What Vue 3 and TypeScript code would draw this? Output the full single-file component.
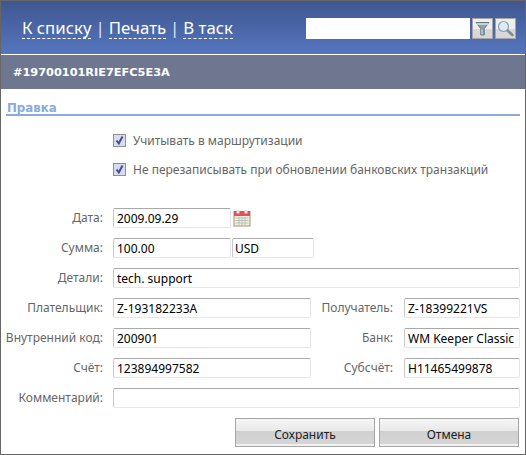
<script setup lang="ts">
const links = ['К списку', 'Печать', 'В таск']
</script>

<template>
  <div class="win">
    <header class="top">
      <nav class="nav">
        <template v-for="(l, i) in links" :key="l">
          <span v-if="i" class="sep">|</span>
          <a class="link">{{ l }}</a>
        </template>
      </nav>
      <div class="search">
        <input class="q" type="text" />
        <button class="ib" type="button" aria-label="filter">
          <svg width="19" height="19" viewBox="0 0 19 19">
            <path d="M3 3.500h13l-4.800 6.200v6.300h-3.400v-6.300z" fill="#8ea3a8" stroke="#66797e" stroke-width="1" />
            <path d="M3.500 5h12" stroke="#d8e4e6" stroke-width="1.500" />
            <path d="M9 10.500v5" stroke="#dbe6e8" stroke-width="1" />
          </svg>
        </button>
        <button class="ib" type="button" aria-label="search">
          <svg width="19" height="19" viewBox="0 0 19 19">
            <path d="M11.500 11.500l5 4.500" stroke="#7d8f93" stroke-width="2.600" stroke-linecap="round" />
            <circle cx="7.500" cy="7.500" r="5" fill="#dcebf6" stroke="#8ba2ab" stroke-width="1.200" />
          </svg>
        </button>
      </div>
    </header>
    <div class="bar">#19700101RIE7EFC5E3A</div>
    <h2 class="title">Правка</h2>
    <div class="checks">
      <label class="check"><span class="box"><svg width="11" height="11" viewBox="0 0 11 11"><path d="M2.500 5.500l2.300 3 3.700-7" fill="none" stroke="#3b4f9c" stroke-width="2" /></svg></span>Учитывать в маршрутизации</label>
      <label class="check"><span class="box"><svg width="11" height="11" viewBox="0 0 11 11"><path d="M2.500 5.500l2.300 3 3.700-7" fill="none" stroke="#3b4f9c" stroke-width="2" /></svg></span>Не перезаписывать при обновлении банковских транзакций</label>
    </div>
    <form class="form" @submit.prevent>
      <div class="row">
        <label class="lab">Дата:</label>
        <input class="inp date" value="2009.09.29" />
        <svg class="cal" width="18" height="18" viewBox="0 0 18 18">
          <rect x="1" y="2.500" width="16" height="14.500" fill="#f3efe2" stroke="#a98f5c" />
          <rect x="1" y="2" width="16" height="5" fill="#e0525a" />
          <rect x="3.500" y="1" width="3" height="3.500" fill="#e4e4e4" />
          <rect x="11.500" y="1" width="3" height="3.500" fill="#e4e4e4" />
          <path d="M2.500 9h13M2.500 11.500h13M2.500 14h13M6 8v8M9 8v8M12 8v8" stroke="#b9c3b8" stroke-width="1" />
        </svg>
      </div>
      <div class="row">
        <label class="lab">Сумма:</label>
        <input class="inp date" value="100.00" />
        <input class="inp cur" value="USD" />
      </div>
      <div class="row">
        <label class="lab">Детали:</label>
        <input class="inp full" value="tech. support" />
      </div>
      <div class="row">
        <label class="lab">Плательщик:</label>
        <input class="inp left" value="Z-193182233A" />
        <label class="lab2">Получатель:</label>
        <input class="inp right" value="Z-18399221VS" />
      </div>
      <div class="row">
        <label class="lab">Внутренний код:</label>
        <input class="inp left" value="200901" />
        <label class="lab2">Банк:</label>
        <input class="inp right" value="WM Keeper Classic" />
      </div>
      <div class="row">
        <label class="lab">Счёт:</label>
        <input class="inp left" value="123894997582" />
        <label class="lab2">Субсчёт:</label>
        <input class="inp right" value="H11465499878" />
      </div>
      <div class="row">
        <label class="lab">Комментарий:</label>
        <input class="inp full" value="" />
      </div>
      <div class="actions">
        <button class="btn" type="button">Сохранить</button>
        <button class="btn" type="button">Отмена</button>
      </div>
    </form>
  </div>
</template>

<style scoped>
.win {
  box-sizing: border-box;
  width: 526px;
  height: 455px;
  border: 1px solid #666;
  background: #fff;
  font-family: "Noto Sans", sans-serif;
  font-size: 12px;
  color: #666;
  overflow: hidden;
}
.top {
  box-sizing: border-box;
  height: 53px;
  padding: 17px 9px 0 21px;
  display: flex;
  justify-content: space-between;
  align-items: flex-start;
  background: linear-gradient(#3f5790, #5575bd);
}
.nav {
  display: flex;
  gap: 4px;
  color: #dfe6f5;
  font-family: "Noto Sans", sans-serif;
  font-size: 16.8px;
  line-height: 20px;
}
.link {
  color: #fff;
  height: 20px;
  border-bottom: 1px dashed #fff;
}
.search {
  display: flex;
  gap: 2px;
}
.q {
  box-sizing: border-box;
  width: 164px;
  height: 21px;
  border: 0;
  background: #fff;
}
.ib {
  box-sizing: border-box;
  width: 21px;
  height: 21px;
  padding: 0;
  display: flex;
  align-items: center;
  justify-content: center;
  border: 1px solid #a5a5a5;
  background: linear-gradient(#eeeeee 0 55%, #d8d8d8 55% 100%);
}
.bar {
  box-sizing: border-box;
  margin-top: 1px;
  height: 34px;
  padding: 0 12px;
  background: #6f7790;
  color: #fff;
  font-family: "DejaVu Sans", sans-serif;
  font-weight: 700;
  font-size: 11.3px;
  line-height: 35px;
}
.title {
  box-sizing: border-box;
  margin: 9px 5px 0;
  height: 18px;
  border-bottom: 2px solid #8aa9de;
  color: #8aa9de;
  font-family: "DejaVu Sans", sans-serif;
  font-size: 11.8px;
  font-weight: 700;
  line-height: 21px;
  padding-left: 1px;
}
.checks {
  margin: 18px 0 0 112px;
  display: flex;
  flex-direction: column;
  gap: 16px;
}
.check {
  display: flex;
  align-items: center;
  gap: 7px;
  height: 13px;
}
.box {
  box-sizing: border-box;
  width: 13px;
  height: 13px;
  display: flex;
  align-items: center;
  justify-content: center;
  border: 1px solid #8f8f8f;
  background: #d9dcec;
}
.form {
  margin-top: 32px;
  display: flex;
  flex-direction: column;
  gap: 10px;
}
.row {
  display: flex;
  align-items: center;
  height: 20px;
}
.lab {
  box-sizing: border-box;
  width: 102px;
  margin-right: 10px;
  padding-bottom: 2px;
  text-align: right;
  white-space: nowrap;
}
.lab2 {
  width: 82px;
  margin-right: 11px;
  padding-bottom: 2px;
  text-align: right;
}
.inp {
  box-sizing: border-box;
  height: 20px;
  padding: 0 3px;
  border: 1px solid #e3e6ea;
  border-top-color: #a9a9a9;
  border-left-color: #c9c9c9;
  border-radius: 2px;
  background: #fff;
  color: #000;
  font-family: "Noto Sans", sans-serif;
  font-size: 12px;
  outline: 0;
}
.date { width: 118px; }
.cur { width: 82px; margin-left: 1px; padding-left: 2px; }
.full { width: 407px; }
.left { width: 198px; }
.right { width: 116px; }
.cal { margin-left: 2px; }
.actions {
  display: flex;
  gap: 4px;
  margin: 0 0 0 234px;
  height: 29px;
}
.btn {
  box-sizing: border-box;
  width: 140px;
  height: 29px;
  padding: 3px 0 0;
  border: 1px solid #a5a5a5;
  background: linear-gradient(#f6f6f6, #e8e8e8 46%, #d0d0d0 46%, #d5d5d5 92%, #f0f0f0 92%);
  color: #222;
  font-family: "Noto Sans", sans-serif;
  font-size: 12px;
}
</style>
